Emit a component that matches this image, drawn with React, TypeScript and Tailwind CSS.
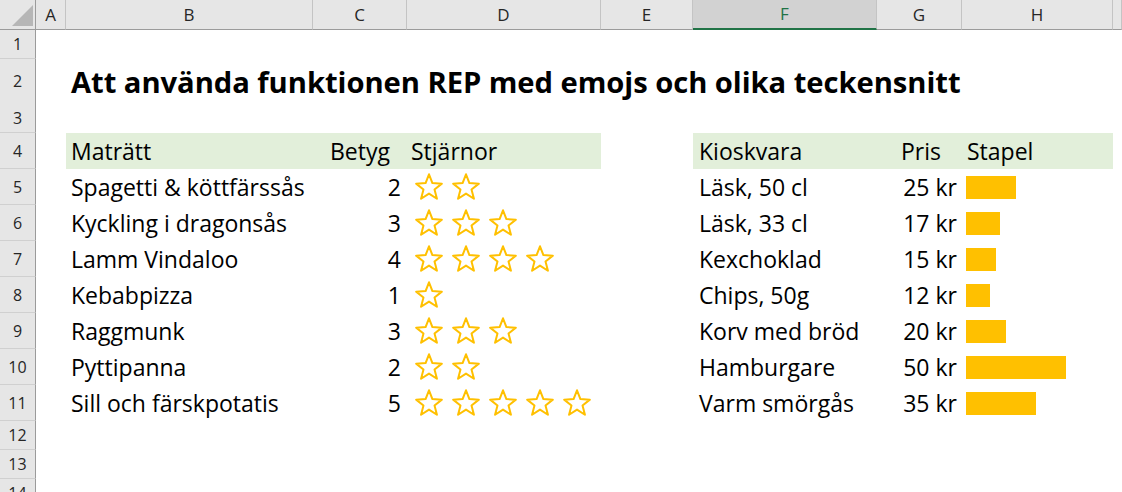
import React from 'react';

// Column template: row header | A | B | C | D | E | F | G | H | rest
const COLS = 'grid grid-cols-[36px_30px_247px_94px_194px_92px_184px_85px_151px_1fr]';
const FONT = "font-['Open_Sans','Liberation_Sans',sans-serif]";

const dishes: [string, number][] = [
  ['Spagetti & köttfärssås', 2],
  ['Kyckling i dragonsås', 3],
  ['Lamm Vindaloo', 4],
  ['Kebabpizza', 1],
  ['Raggmunk', 3],
  ['Pyttipanna', 2],
  ['Sill och färskpotatis', 5],
];

const kiosk: [string, number][] = [
  ['Läsk, 50 cl', 25],
  ['Läsk, 33 cl', 17],
  ['Kexchoklad', 15],
  ['Chips, 50g', 12],
  ['Korv med bröd', 20],
  ['Hamburgare', 50],
  ['Varm smörgås', 35],
];

function Star() {
  return (
    <svg width="30" height="30" viewBox="0 0 30 30" className="shrink-0">
      <polygon
        points="15,2.3 18.41,11.11 27.84,11.63 20.52,17.59 22.94,26.72 15,21.6 7.06,26.72 9.48,17.59 2.16,11.63 11.59,11.11"
        fill="none"
        stroke="#ffc000"
        strokeWidth="2"
        strokeLinejoin="round"
      />
    </svg>
  );
}

function RowHead({ n }: { n: number }) {
  return (
    <div className="flex items-center justify-center border-r border-b border-r-[#9b9b9b] border-b-[#d0d0d0] bg-[#e6e6e6] text-[16px] text-[#262626]">
      {n}
    </div>
  );
}

function Empty({ n, h }: { n: number; h: string }) {
  return (
    <div className={`${COLS} ${h}`}>
      <RowHead n={n} />
    </div>
  );
}

export default function App() {
  const letters = ['A', 'B', 'C', 'D', 'E', 'F', 'G', 'H', ''];

  return (
    <div className={`h-[492px] w-[1122px] overflow-hidden bg-white text-black ${FONT}`}>
      {/* Column headers */}
      <div className={`${COLS} h-[30px]`}>
        <div className="relative border-r border-b border-[#9b9b9b] bg-[#e6e6e6]">
          <svg className="absolute left-[12px] top-[5px]" width="22" height="21" viewBox="0 0 22 21">
            <polygon points="0,21 21,21 21,0" fill="#b6b6b6" />
          </svg>
        </div>
        {letters.map((l, i) => (
          <div
            key={i}
            className={
              l === 'F'
                ? 'flex items-center justify-center border-b-2 border-b-[#217346] border-r border-r-[#c4c4c4] bg-[#d2d2d2] pb-[1px] text-[17px] text-[#217346]'
                : 'flex items-center justify-center border-b border-b-[#9b9b9b] border-r border-r-[#c4c4c4] bg-[#e6e6e6] text-[17px] text-[#262626]'
            }
          >
            {l}
          </div>
        ))}
      </div>

      <Empty n={1} h="h-[29px]" />

      {/* Title */}
      <div className={`${COLS} h-[45px]`}>
        <RowHead n={2} />
        <div />
        <div className="col-span-8 flex items-center whitespace-nowrap pl-[5px] pt-[2px] text-[29.2px] font-bold tracking-[-0.05px]">
          Att använda funktionen REP med emojs och olika teckensnitt
        </div>
      </div>

      <Empty n={3} h="h-[29px]" />

      {/* Table headers */}
      <div className={`${COLS} h-[36px] text-[23px]`}>
        <RowHead n={4} />
        <div />
        <div className="flex items-center bg-[#e2efda] pl-[5px]">Maträtt</div>
        <div className="flex items-center bg-[#e2efda] pl-[17px]">Betyg</div>
        <div className="flex items-center bg-[#e2efda] pl-[4px]">Stjärnor</div>
        <div />
        <div className="flex items-center bg-[#e2efda] pl-[6px]">Kioskvara</div>
        <div className="flex items-center bg-[#e2efda] pl-[24px]">Pris</div>
        <div className="flex items-center bg-[#e2efda] pl-[5px]">Stapel</div>
      </div>

      {dishes.map(([dish, score], i) => {
        const [item, price] = kiosk[i];
        return (
          <div key={dish} className={`${COLS} h-[36px] text-[23px]`}>
            <RowHead n={5 + i} />
            <div />
            <div className="flex items-center whitespace-nowrap pl-[5px]">{dish}</div>
            <div className="flex items-center justify-end pr-[6px]">{score}</div>
            <div className="flex items-center gap-[7px] pl-[7px]">
              {Array.from({ length: score }).map((_, k) => (
                <Star key={k} />
              ))}
            </div>
            <div />
            <div className="flex items-center whitespace-nowrap pl-[6px]">{item}</div>
            <div className="flex items-center justify-end pr-[5px]">{price} kr</div>
            <div className="flex items-center pl-[4px]">
              <div className="h-[23px] bg-[#ffc000]" style={{ width: price * 2 }} />
            </div>
          </div>
        );
      })}

      <Empty n={12} h="h-[29px]" />
      <Empty n={13} h="h-[29px]" />
      <Empty n={14} h="h-[29px]" />
    </div>
  );
}
